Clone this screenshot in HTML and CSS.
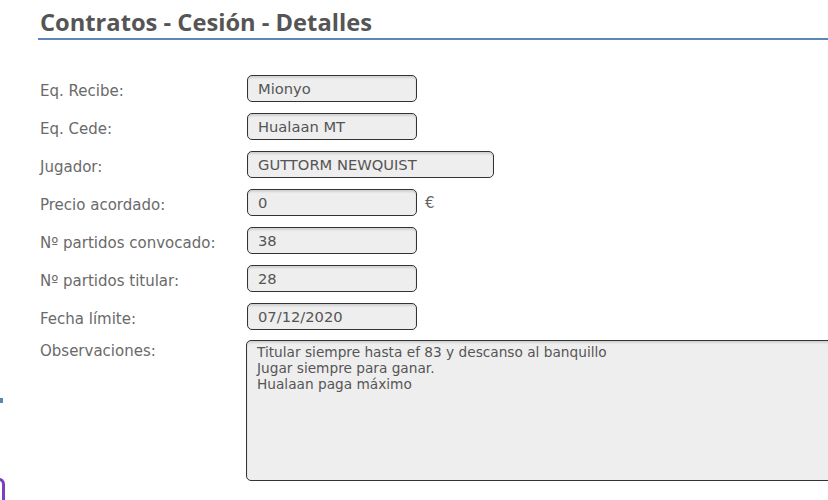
FILE: index.html
```html
<!DOCTYPE html>
<html lang="es">
<head>
  <meta charset="UTF-8">
  <title>Contratos - Cesión - Detalles</title>
  <link rel="stylesheet" href="styles.css">
</head>
<body>

<div class="side-mark"></div>
<div class="side-tab"></div>

<div class="page">
  <h1 class="title">Contratos - Cesión - Detalles</h1>

  <div class="form">
    <label for="recibe">Eq. Recibe:</label>
    <div class="field"><input id="recibe" class="box" type="text" value="Mionyo" readonly></div>

    <label for="cede">Eq. Cede:</label>
    <div class="field"><input id="cede" class="box" type="text" value="Hualaan MT" readonly></div>

    <label for="jugador">Jugador:</label>
    <div class="field"><input id="jugador" class="box wide" type="text" value="GUTTORM NEWQUIST" readonly></div>

    <label for="precio">Precio acordado:</label>
    <div class="field"><input id="precio" class="box" type="text" value="0" readonly><span class="unit">€</span></div>

    <label for="convocado">Nº partidos convocado:</label>
    <div class="field"><input id="convocado" class="box" type="text" value="38" readonly></div>

    <label for="titular">Nº partidos titular:</label>
    <div class="field"><input id="titular" class="box" type="text" value="28" readonly></div>

    <label for="fecha">Fecha límite:</label>
    <div class="field"><input id="fecha" class="box" type="text" value="07/12/2020" readonly></div>

    <label for="obs" class="top">Observaciones:</label>
    <div class="field"><textarea id="obs" class="box notes" readonly>Titular siempre hasta ef 83 y descanso al banquillo
Jugar siempre para ganar.
Hualaan paga máximo</textarea></div>
  </div>
</div>

</body>
</html>
```

FILE: styles.css
```css
body {
  margin: 0;
  background: #fff;
  font-family: "DejaVu Sans", Verdana, sans-serif;
  overflow: hidden;
}
.page {
  padding: 8px 0 0 40px;
}
.title {
  margin: 0 0 0 -2px;
  padding: 0 0 1px 2px;
  font-family: "Open Sans", sans-serif;
  font-size: 23.7px;
  font-weight: bold;
  color: #555;
  line-height: 29px;
  border-bottom: 2px solid #5b86bb;
}
.form {
  display: grid;
  grid-template-columns: 207px 1fr;
  row-gap: 11px;
  margin-top: 35px;
}
label {
  font-size: 15px;
  color: #6a6a6a;
  align-self: center;
  padding-top: 4px;
}
label.top {
  align-self: start;
  padding-top: 1px;
}
.field {
  display: flex;
  align-items: center;
}
.box {
  box-sizing: border-box;
  width: 170px;
  height: 27px;
  padding: 0 10px;
  font-family: "DejaVu Sans", Verdana, sans-serif;
  font-size: 14.7px;
  color: #555;
  background: #eee;
  border: 1px solid #333;
  border-radius: 5px;
  box-shadow: inset 0 2px 2px rgba(0, 0, 0, 0.12);
  outline: none;
}
.box.wide {
  width: 247px;
}
.unit {
  margin-left: 8px;
  font-size: 15px;
  color: #666;
}
.notes {
  width: 600px;
  height: 141px;
  margin: -1px 0 0 -1px;
  padding: 3px 10px;
  font-size: 13.7px;
  line-height: 16px;
  resize: none;
  overflow: hidden;
}
.side-mark {
  position: absolute;
  left: 0;
  top: 398px;
  width: 3px;
  height: 5px;
  background: #5b86bb;
}
.side-tab {
  position: absolute;
  left: -10px;
  top: 478px;
  width: 12px;
  height: 40px;
  border-right: 3px solid #7b3fc4;
  border-top: 3px solid #7b3fc4;
  border-top-right-radius: 6px;
}
```
